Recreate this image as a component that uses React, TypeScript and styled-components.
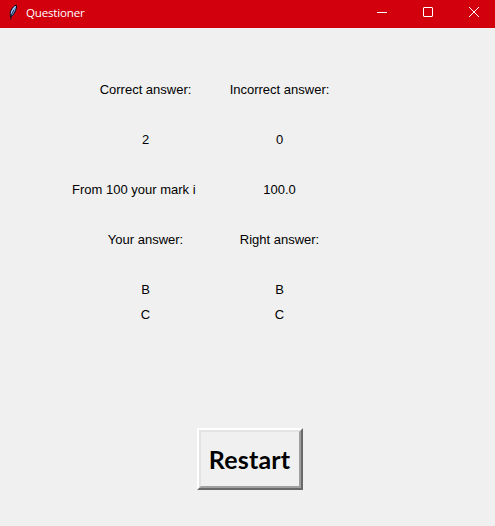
import React from "react";
import styled, { createGlobalStyle } from "styled-components";

const GlobalStyle = createGlobalStyle`
  html, body { margin: 0; padding: 0; background: #f0f0f0; }
`;

const Window = styled.div`
  display: flex;
  flex-direction: column;
  width: 495px;
  height: 526px;
  overflow: hidden;
  background: #f0f0f0;
  color: #000;
  font-family: "Liberation Sans", Arial, sans-serif;
  font-size: 13px;
`;

const TitleBar = styled.header`
  display: flex;
  align-items: center;
  flex: none;
  height: 28px;
  padding-left: 8px;
  box-sizing: border-box;
  background: #d2000d;
  color: #fff;
`;

const Title = styled.h1`
  flex: 1;
  margin: 0 0 3px 7px;
  font: 400 11.6px/16px "Open Sans", "Noto Sans", sans-serif;
  letter-spacing: -0.2px;
`;

const FeatherIcon = styled.svg`
  flex: none;
  width: 11px;
  height: 17px;
  margin-bottom: 4px;
`;

const Controls = styled.div`
  display: flex;
  margin: 0 -2px 4px 0;
`;

const ControlButton = styled.button`
  display: flex;
  align-items: center;
  justify-content: center;
  width: 46px;
  height: 24px;
  padding: 0;
  border: 0;
  background: transparent;
  color: #fff;
`;

const Results = styled.main`
  display: grid;
  grid-template-columns: 134px 165px;
  grid-auto-rows: 25px;
  padding: 49px 0 0 63px;
`;

const Label = styled.div<{ $column: number; $row: number; $clipped?: boolean }>`
  grid-column: ${(p) => p.$column};
  grid-row: ${(p) => p.$row};
  box-sizing: border-box;
  width: ${(p) => (p.$clipped ? 134 : 165)}px;
  padding-left: ${(p) => (p.$clipped ? 9 : 0)}px;
  overflow: hidden;
  line-height: 25px;
  text-align: ${(p) => (p.$clipped ? "left" : "center")};
  white-space: nowrap;
`;

const RestartButton = styled.button`
  flex: none;
  width: 106px;
  height: 62px;
  margin: 101px 0 0 197px;
  padding: 0;
  border: 2px solid;
  border-color: #fff #696969 #696969 #fff;
  background: #f0f0f0;
  color: #000;
`;

const ButtonFace = styled.span`
  display: flex;
  align-items: center;
  justify-content: center;
  box-sizing: border-box;
  width: 100%;
  height: 100%;
  padding-right: 1px;
  border: 2px solid;
  border-color: #e3e3e3 #a0a0a0 #a0a0a0 #e3e3e3;
  font: 700 25px/30px Lato, sans-serif;
  letter-spacing: 0.2px;
`;

const labels = [
  { row: 1, left: "Correct answer:", right: "Incorrect answer:" },
  { row: 3, left: "2", right: "0" },
  { row: 5, left: "From 100 your mark i", right: "100.0", clipped: true },
  { row: 7, left: "Your answer:", right: "Right answer:" },
  { row: 9, left: "B", right: "B" },
  { row: 10, left: "C", right: "C" },
];

export default function App() {
  return (
    <Window>
      <GlobalStyle />
      <TitleBar>
        <FeatherIcon viewBox="0 0 11 17">
          <path d="M8.2 1 C5 2.5 2.6 6 2.2 9 L2.4 13 C5.5 11.5 7.5 8 8.6 3Z" fill="#6f9fe0" stroke="#080818" />
          <path d="M7.3 2.2 Q4 6 3.2 9.5" fill="none" stroke="#b8d8ff" strokeWidth="1" />
          <path d="M5.8 6 Q3 10 2.6 16" fill="none" stroke="#101020" strokeWidth=".8" />
        </FeatherIcon>
        <Title>Questioner</Title>
        <Controls>
          <ControlButton aria-label="Minimize">
            <svg width="10" height="10"><path d="M0 5.5H10" stroke="currentColor" /></svg>
          </ControlButton>
          <ControlButton aria-label="Maximize">
            <svg width="10" height="10"><rect x=".5" y=".5" width="9" height="9" rx=".5" fill="none" stroke="currentColor" /></svg>
          </ControlButton>
          <ControlButton aria-label="Close">
            <svg width="10" height="10"><path d="M0 0L10 10M10 0L0 10" stroke="currentColor" /></svg>
          </ControlButton>
        </Controls>
      </TitleBar>
      <Results>
        {labels.map((l) => (
          <React.Fragment key={l.row}>
            <Label $column={1} $row={l.row} $clipped={l.clipped}>{l.left}</Label>
            <Label $column={2} $row={l.row}>{l.right}</Label>
          </React.Fragment>
        ))}
      </Results>
      <RestartButton><ButtonFace>Restart</ButtonFace></RestartButton>
    </Window>
  );
}
